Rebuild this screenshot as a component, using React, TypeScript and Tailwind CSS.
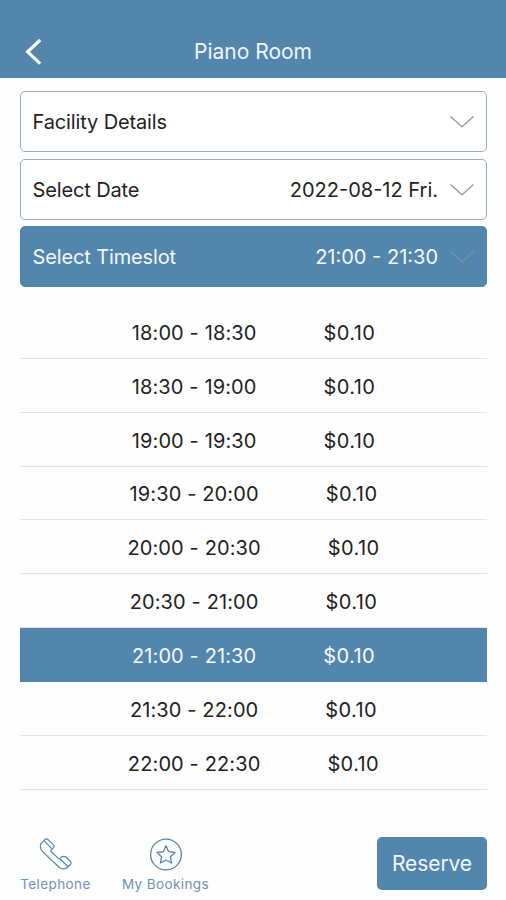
type Slot = { time: string; price: string; selected?: boolean };

const slots: Slot[] = [
  { time: '18:00 - 18:30', price: '$0.10' },
  { time: '18:30 - 19:00', price: '$0.10' },
  { time: '19:00 - 19:30', price: '$0.10' },
  { time: '19:30 - 20:00', price: '$0.10' },
  { time: '20:00 - 20:30', price: '$0.10' },
  { time: '20:30 - 21:00', price: '$0.10' },
  { time: '21:00 - 21:30', price: '$0.10', selected: true },
  { time: '21:30 - 22:00', price: '$0.10' },
  { time: '22:00 - 22:30', price: '$0.10' },
];

function Chevron({ color }: { color: string }) {
  return (
    <svg className="ml-3 h-3 w-6 shrink-0" viewBox="0 0 24 12" fill="none" stroke={color} strokeWidth="1.3">
      <path d="M0.5 0.6 L12 10.8 L23.5 0.6" />
    </svg>
  );
}

function Field({ label, value, active }: { label: string; value?: string; active?: boolean }) {
  return (
    <div
      className={
        'flex h-[61px] items-center rounded-[5px] border pl-[11.5px] pr-3 pt-px text-[20px] ' +
        (active ? 'border-[#5386ac] bg-[#5386ac] text-[#f3f9ff]' : 'border-[#93afc7] bg-white text-[#222]')
      }
    >
      <span className="flex-1 tracking-[-0.13px]">{label}</span>
      <span>{value}</span>
      <Chevron color={active ? '#7b91a4' : '#999b9d'} />
    </div>
  );
}

function PhoneIcon() {
  return (
    <svg className="h-[34px] w-[34px]" viewBox="0 0 34 34" fill="none" stroke="#5386ac" strokeWidth="1.2" strokeLinejoin="round">
      <path d="M5.6 2.8 Q7.6 1 9.4 2.8 L14.4 7.9 Q15.8 9.4 14.4 10.9 L12 13.1 Q11.4 13.8 12 14.5 L19.4 21.4 Q20.2 22.1 21 21.4 L22.6 19.9 Q25 18.6 27 20 L31.3 24.2 Q32.9 26 31.4 27.8 L28.4 30.6 Q24.3 33.2 20.4 30.5 L3.3 14.4 Q.3 10.8 2 6.6 Z" />
      <path d="M5.4 4.2 L13 11.9 M20.9 21.8 L29 29.7" />
    </svg>
  );
}

function StarIcon() {
  return (
    <svg className="h-[34px] w-[34px]" viewBox="0 0 34 34" fill="none" stroke="#5386ac" strokeWidth="1.3" strokeLinejoin="round">
      <circle cx="17" cy="17.5" r="15.4" />
      <path d="M17 8.8 L19.7 14.7 L26 15.5 L21.4 19.8 L22.6 26 L17 23 L11.4 26 L12.6 19.8 L8 15.5 L14.3 14.7 Z" />
    </svg>
  );
}

export default function App() {
  return (
    <div className="flex h-[900px] w-[506px] flex-col overflow-hidden bg-[#fefefe] font-['Inter','Liberation_Sans',sans-serif]">
      <header className="grid h-[78px] shrink-0 grid-cols-[1fr_auto_1fr] items-center bg-[#5386ac] pt-[26px] text-[21px] text-[#eff6fd]">
        <svg className="ml-[23.5px] h-7 w-[18px]" viewBox="0 0 18 28" fill="none" stroke="#fff" strokeWidth="3.2">
          <path d="M16.2 2 L3.6 13.8 L16.2 25.6" />
        </svg>
        <h1>Piano Room</h1>
      </header>
      <main className="pl-5 pr-[19px] pt-[13px]">
        <div className="flex flex-col gap-[6.5px]">
          <Field label="Facility Details" />
          <Field label="Select Date" value="2022-08-12 Fri." />
          <Field label="Select Timeslot" value="21:00 - 21:30" active />
        </div>
        <ul className="mt-[18px]">
          {slots.map((slot) => (
            <li
              key={slot.time}
              className={
                'flex h-[53.85px] items-center justify-center gap-[67px] border-b pt-[3px] text-[20px] tracking-[0.12px] ' +
                (slot.selected ? 'border-[#5386ac] bg-[#5386ac] text-[#f3f9ff]' : 'border-[#e3e3e3] text-[#222]')
              }
            >
              <span>{slot.time}</span>
              <span className="tracking-[0.4px]">{slot.price}</span>
            </li>
          ))}
        </ul>
      </main>
      <footer className="mt-auto flex h-[63px] shrink-0 items-start pl-5 pr-[19px] text-[13.5px] leading-4 tracking-[0.4px] text-[#6f94b3]">
        <button className="flex w-[71px] flex-col items-center whitespace-nowrap">
          <PhoneIcon />
          <span className="mt-[5px]">Telephone</span>
        </button>
        <button className="ml-[30px] flex w-[89px] flex-col items-center whitespace-nowrap">
          <StarIcon />
          <span className="mt-[5px]">My Bookings</span>
        </button>
        <button className="ml-auto h-[53px] w-[110px] rounded-[5px] bg-[#5386ac] text-[21px] tracking-[-0.1px] text-[#eff6fd]">Reserve</button>
      </footer>
    </div>
  );
}
